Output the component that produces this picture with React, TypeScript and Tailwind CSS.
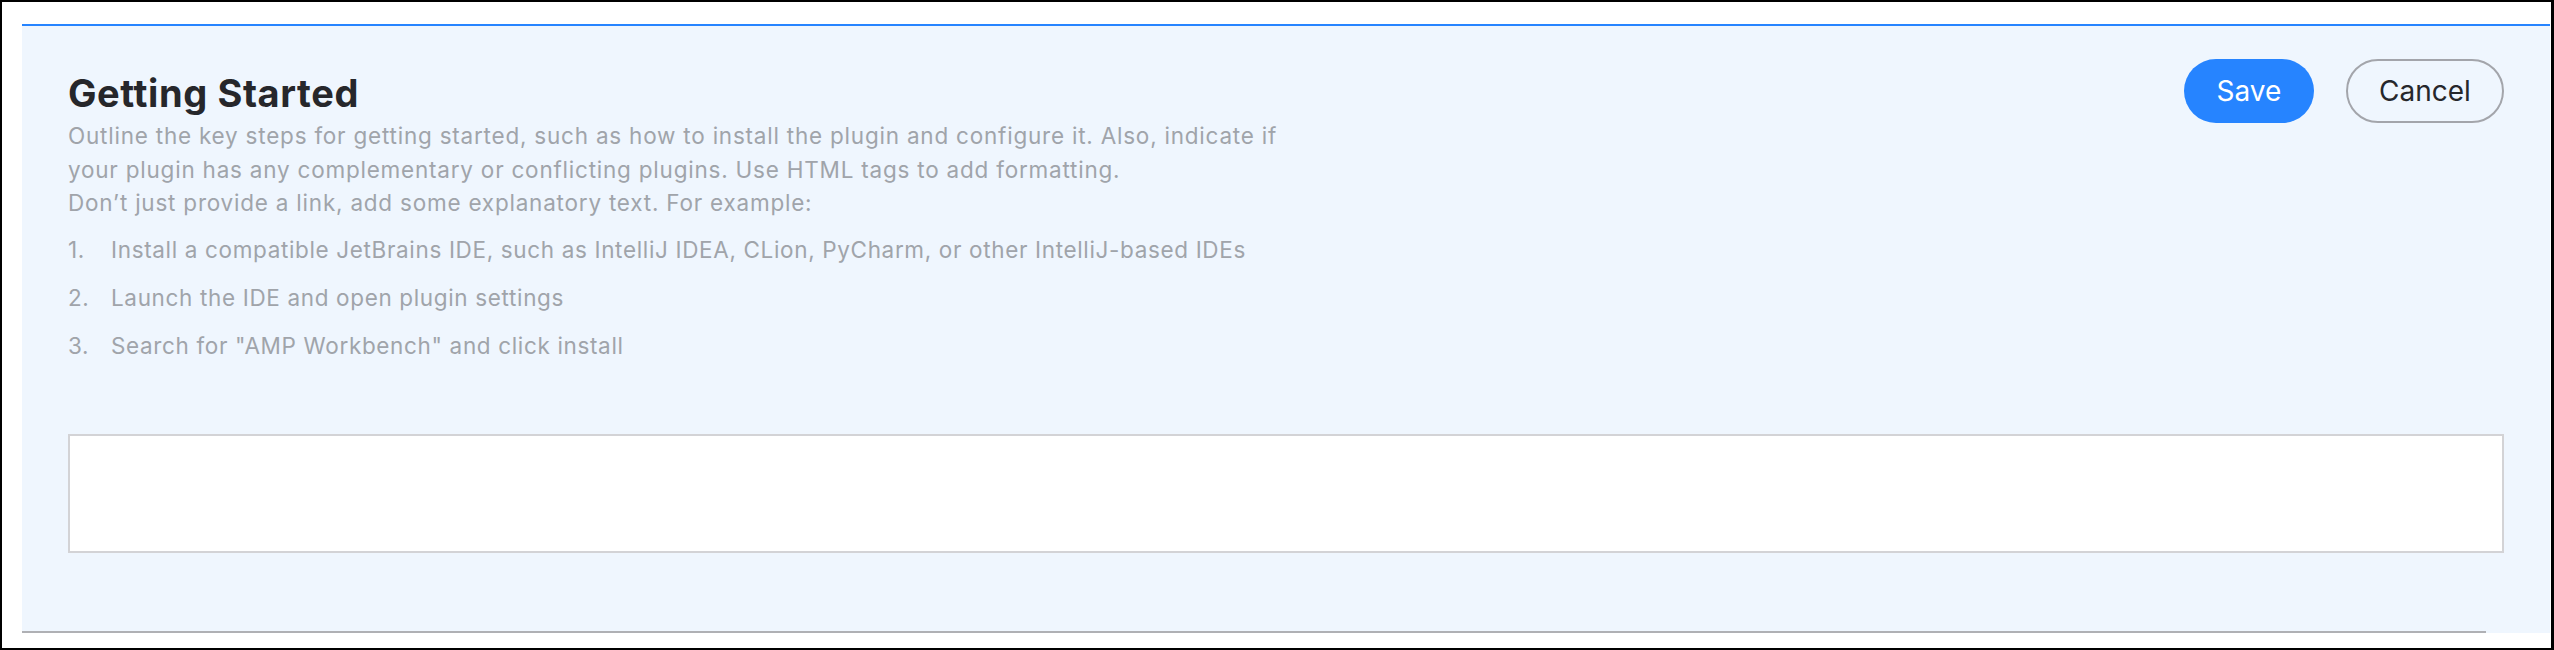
import React from "react";

export default function App() {
  return (
    <div
      className="w-[2554px] h-[650px] bg-white border-t-2 border-l-2 border-b-2 border-r-[3px] border-black overflow-hidden"
      style={{ fontFamily: "Inter, 'Noto Sans', sans-serif" }}
    >
      <div className="ml-[20px] mr-[1px] mt-[22px] bg-[#eff6fe] border-t-2 border-[#2684ff] flex flex-col">
        <div className="px-[46px] pt-[33px] pb-[78px] flex flex-col">
          <div className="flex flex-row justify-between items-start">
            <div className="flex flex-col">
              <h1 className="mt-[14px] text-[38px] leading-[40px] font-bold text-[#26272b] tracking-[0.6px]">
                Getting Started
              </h1>
              <div className="mt-[6px] text-[22.5px] leading-[33.5px] tracking-[0.78px] text-[#a0a4aa]">
                <div className="whitespace-nowrap">
                  Outline the key steps for getting started, such as how to install the plugin and configure it. Also, indicate if
                </div>
                <div className="whitespace-nowrap">
                  your plugin has any complementary or conflicting plugins. Use HTML tags to add formatting.
                </div>
                <div className="whitespace-nowrap">
                  Don’t just provide a link, add some explanatory text. For example:
                </div>
              </div>
              <ol className="mt-[13px] flex flex-col gap-[14.5px] text-[22.5px] leading-[33.5px] tracking-[0.65px] text-[#a0a4aa]">
                <li className="flex flex-row whitespace-nowrap">
                  <span className="w-[43px]">1.</span>
                  <span>Install a compatible JetBrains IDE, such as IntelliJ IDEA, CLion, PyCharm, or other IntelliJ-based IDEs</span>
                </li>
                <li className="flex flex-row whitespace-nowrap">
                  <span className="w-[43px]">2.</span>
                  <span>Launch the IDE and open plugin settings</span>
                </li>
                <li className="flex flex-row whitespace-nowrap">
                  <span className="w-[43px]">3.</span>
                  <span>Search for "AMP Workbench" and click install</span>
                </li>
              </ol>
            </div>
            <div className="flex flex-row gap-[32px]">
              <button className="h-[64px] w-[130px] rounded-full bg-[#2684ff] text-white text-[28px] flex items-center justify-center">
                Save
              </button>
              <button className="h-[64px] w-[158px] rounded-full border-2 border-[#a3a5ab] text-[#26272b] text-[28px] flex items-center justify-center">
                Cancel
              </button>
            </div>
          </div>
          <div className="mt-[72px] h-[119px] bg-white border-2 border-[#d3d3d6]"></div>
        </div>
        <div className="h-[2px] w-[2464px] bg-[#afb0b4]"></div>
      </div>
    </div>
  );
}
